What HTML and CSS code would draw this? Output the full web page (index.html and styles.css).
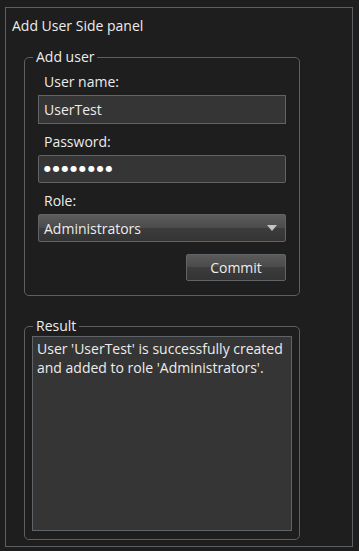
FILE: index.html
```html
<!DOCTYPE html>
<html lang="en">
<head>
    <meta charset="UTF-8">
    <meta name="viewport" content="width=device-width, initial-scale=1.0">
    <title>Add User Side panel</title>
    <link rel="stylesheet" href="styles.css">
</head>
<body>
<div class="panel">
    <div class="panel-title">Add User Side panel</div>

    <fieldset class="group">
        <legend>Add user</legend>
        <div class="form-group">
            <label for="user-name">User name:</label>
            <div class="field" id="user-name">UserTest</div>
        </div>
        <div class="form-group">
            <label for="password">Password:</label>
            <div class="field dots" id="password">&#9679;&#9679;&#9679;&#9679;&#9679;&#9679;&#9679;&#9679;</div>
        </div>
        <div class="form-group">
            <label for="role">Role:</label>
            <div class="select" id="role">
                <span>Administrators</span>
                <span class="arrow"></span>
            </div>
        </div>
        <div class="actions">
            <button type="button">Commit</button>
        </div>
    </fieldset>

    <fieldset class="group result">
        <legend>Result</legend>
        <div class="result-box">User 'UserTest' is successfully created and added to role 'Administrators'.</div>
    </fieldset>
</div>
</body>
</html>
```

FILE: styles.css
```css
:root {
    --background-color: #1e1e1e;
    --text-color: #ececec;
    --border-color: #5a6063;
    --field-color: #353535;
    --font-family: 'Open Sans', 'Noto Sans', sans-serif;
}
body {
    margin: 0;
    padding: 7px 0 0 5px;
    background-color: var(--background-color);
    color: var(--text-color);
    font-family: var(--font-family);
    font-size: 14px;
}
.panel {
    width: 348px;
    height: 540px;
    box-sizing: border-box;
    border: 1px solid var(--border-color);
    padding: 8px 0 0 6px;
}
.panel-title {
    line-height: 20px;
    margin-bottom: 12px;
}
.group {
    width: 276px;
    box-sizing: border-box;
    margin: 0 0 0 12px;
    padding: 0 13px 14px 13px;
    border: 1px solid var(--border-color);
    border-radius: 5px;
}
.group legend {
    margin-left: -5px;
    padding: 0 3px;
    line-height: 18px;
}
.form-group label {
    display: block;
    padding-left: 6px;
    line-height: 20px;
    margin: 8px 0 3px;
}
.form-group:first-of-type label {
    margin-top: 6px;
}
.field {
    height: 29px;
    box-sizing: border-box;
    border: 1px solid #5e6467;
    background-color: var(--field-color);
    padding: 0 5px;
    line-height: 27px;
}
.field.dots {
    height: 28px;
    line-height: 26px;
    font-family: 'DejaVu Sans', sans-serif;
    font-size: 8px;
    letter-spacing: 1.8px;
    color: #fff;
    border-radius: 2px;
}
.select {
    height: 28px;
    box-sizing: border-box;
    border: 1px solid #5e6467;
    border-radius: 2px;
    padding: 0 8px 0 5px;
    display: flex;
    align-items: center;
    justify-content: space-between;
    background: linear-gradient(#5c5c5c, #4b4b4b 50%, #3c3c3c 50%, #343434);
}
.arrow {
    width: 0;
    height: 0;
    border-left: 5px solid transparent;
    border-right: 5px solid transparent;
    border-top: 6px solid #c4c4c4;
}
.actions {
    display: flex;
    justify-content: flex-end;
    margin-top: 12px;
}
button {
    width: 100px;
    height: 27px;
    border: 1px solid #5e6467;
    border-radius: 2px;
    color: var(--text-color);
    font-family: var(--font-family);
    font-size: 14px;
    background: linear-gradient(#5a5a5a, #4a4a4a 50%, #3c3c3c 50%, #343434);
    cursor: pointer;
}
.result {
    margin-top: 21px;
    padding: 1px 7px 8px 7px;
}
.result legend {
    margin-left: 1px;
}
.result-box {
    height: 195px;
    box-sizing: border-box;
    border: 1px solid #5e6467;
    background-color: var(--field-color);
    padding: 2px 4px;
    line-height: 19px;
}
```
